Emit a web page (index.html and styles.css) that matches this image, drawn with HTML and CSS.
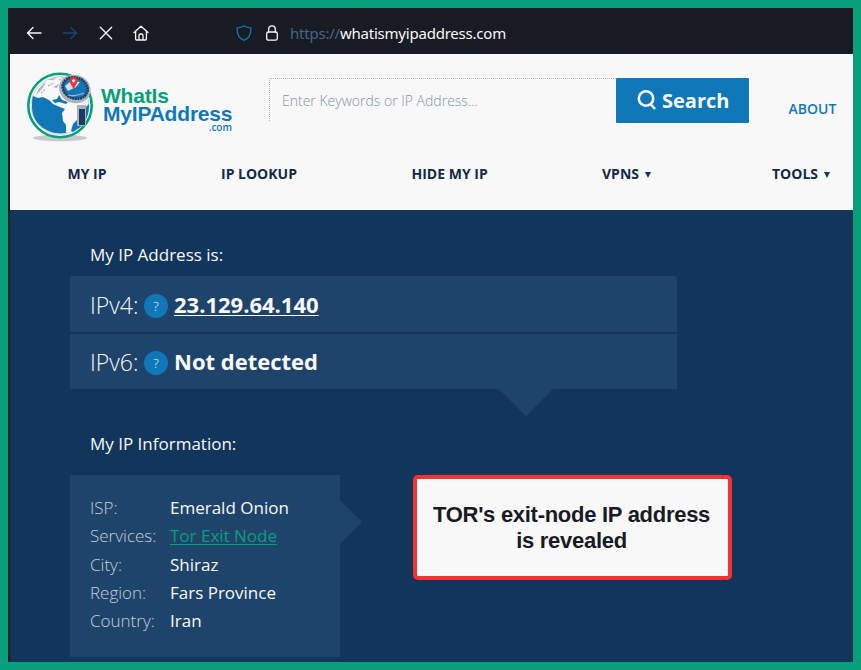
FILE: index.html
```
<!DOCTYPE html>
<html lang="en">
<head>
<meta charset="utf-8">
<title>What Is My IP Address</title>
<link rel="stylesheet" href="styles.css">
</head>
<body>
<div class="window">
  <div class="toolbar">
    <svg class="tool back" viewBox="0 0 16 16"><path d="M15 8H1.500M7 2.500L1.500 8L7 13.500"/></svg>
    <svg class="tool forward" viewBox="0 0 16 16"><path d="M1 8H14.500M9 2.500L14.500 8L9 13.500"/></svg>
    <svg class="tool stop" viewBox="0 0 16 16"><path d="M2.300 2.300L13.700 13.700M13.700 2.300L2.300 13.700"/></svg>
    <svg class="tool home" viewBox="0 0 16 16"><path d="M1 7.600L8 1.200L15 7.600M2.600 6.600V14a1 1 0 0 0 1 1H12.400a1 1 0 0 0 1-1V6.600M6 15V10.500a1.500 1.500 0 0 1 1.500-1.500h1a1.500 1.500 0 0 1 1.500 1.500V15"/></svg>
    <svg class="tool shield" viewBox="0 0 16 16"><path d="M8 .8C6 2.300 3.600 2.800 1.200 2.900C.8 8 2.500 13 8 15.400C13.500 13 15.200 8 14.800 2.900C12.400 2.800 10 2.300 8 .8Z"/></svg>
    <svg class="tool lock" viewBox="0 0 14 16"><rect x="1.700" y="7" width="10.600" height="8.200" rx="1.800"/><path d="M3.700 7V4.200a3.300 3.300 0 0 1 6.600 0V7"/></svg>
    <div class="url"><span class="scheme">https://</span><span class="host">whatismyipaddress.com</span></div>
  </div>
  <header class="header">
    <div class="top">
      <div class="logo">
        <svg class="globe" viewBox="0 0 70 72">
          <ellipse cx="34" cy="67" rx="27" ry="3.200" fill="#c5ccd0"/>
          <circle cx="34" cy="34.500" r="31.700" fill="#f8f8f8" stroke="#08a07b" stroke-width="2.600"/>
          <circle cx="34" cy="34.500" r="28.800" fill="none" stroke="#b8c3ca" stroke-width=".7"/>
          <path d="M7 25L12 27L17 26L23 29L27 33L34 36L39 38L36 42L37 50L40 54L40 62C24 65 6 54 6 36C6 31 6 28 7 25Z" fill="#1078b8"/>
          <path d="M10 24C13 17 16 13 20 11L16 18L10 24ZM21 9L32 6L27 9ZM27 16L33 13L31 17Z" fill="#a8b5be"/>
          <path d="M15 22L20 18M22 15L28 12M33 9L38 6" fill="none" stroke="#a8b5be" stroke-width="1.300" stroke-dasharray="2 1"/>
          <path d="M26 29L31 28L33 24L36 29L42 31L40 33L33 31L29 32Z" fill="#1078b8"/>
          <path d="M52 46L56 55L47 61L45 60L47 53L51 49Z" fill="#1078b8"/>
          <path d="M60 36L63 33C63 42 61 47 59 50Z" fill="#1078b8"/>
          <rect x="51" y="34" width="9" height="21" rx="1" fill="#a8b5be"/>
          <path d="M53 38h6v16h-6Z" fill="#1d3b61"/>
          <g transform="rotate(20 49 17.500)">
            <ellipse cx="49" cy="18" rx="16" ry="14" fill="#a8b5be"/>
            <ellipse cx="49" cy="17" rx="12.800" ry="10.500" fill="#1078b8" stroke="#1d3b61" stroke-width="2.600" stroke-dasharray="2 .6"/>
          </g>
          <path d="M39 15L45 10L54 11L50 16L42 20Z" fill="#d8e0e4"/>
          <path d="M42 24C47 26 53 24 58 22" fill="none" stroke="#a8b5be" stroke-width="1.300"/>
          <path d="M47.600 19C46 14 43.700 13 43.700 9.800a3.900 3.900 0 0 1 7.800 0C51.500 13 49 14 47.600 19Z" fill="#f73131"/>
          <circle cx="47.600" cy="9.800" r="1.600" fill="#f8f8f8"/>
        </svg>
        <div class="wordmark"><span class="what">WhatIs</span><span class="my">MyIPAddress</span><span class="com">.com</span></div>
      </div>
      <div class="search">
        <div class="field"><span class="placeholder">Enter Keywords or IP Address...</span></div>
        <div class="button">
          <svg class="glass" viewBox="0 0 20 20"><circle cx="9" cy="8.500" r="7.200"/><path d="M13.500 14L18 19"/></svg>
          <span class="button-text">Search</span>
        </div>
      </div>
      <div class="about"><span>ABOUT</span></div>
    </div>
    <nav class="nav">
      <span class="n1">MY IP</span><span class="n2">IP LOOKUP</span><span class="n3">HIDE MY IP</span><span class="n4">VPNS<i class="caret"></i></span><span class="n5">TOOLS<i class="caret"></i></span>
    </nav>
  </header>
  <main class="main">
    <h2 class="heading">My IP Address is:</h2>
    <div class="addresses">
      <div class="row"><span class="version">IPv4:</span><span class="help">?</span><span class="value link">23.129.64.140</span></div>
      <div class="row six"><span class="version">IPv6:</span><span class="help">?</span><span class="value none">Not detected</span></div>
    </div>
    <h2 class="heading info-heading">My IP Information:</h2>
    <div class="bottom">
      <dl class="info">
        <dt>ISP:</dt><dd>Emerald Onion</dd>
        <dt>Services:</dt><dd class="tor">Tor Exit Node</dd>
        <dt>City:</dt><dd>Shiraz</dd>
        <dt>Region:</dt><dd>Fars Province</dd>
        <dt>Country:</dt><dd>Iran</dd>
      </dl>
      <div class="callout"><span>TOR's exit-node IP address<br>is revealed</span></div>
    </div>
  </main>
</div>
</body>
</html>
```
FILE: styles.css
```
* { box-sizing: border-box; }
body { margin: 0; font-family: "Open Sans", sans-serif; }
.window {
  width: 861px; height: 670px; overflow: hidden;
  border: 8px solid #08a07b; background: #181b23;
}
.toolbar { height: 46px; display: flex; align-items: center; padding: 4px 0 0 18px; }
.tool { width: 16px; height: 16px; flex: none; fill: none; stroke: #f8f8f8; stroke-width: 1.300; stroke-linecap: round; stroke-linejoin: round; }
.forward { margin-left: 20px; stroke: #1d466f; }
.stop { margin-left: 20px; }
.home { margin-left: 19px; }
.shield { margin-left: 87px; stroke: #1078b8; }
.lock { width: 14px; margin-left: 13px; }
.url { margin-left: 11px; font-family: "Noto Sans", sans-serif; font-size: 15px; line-height: 20px; letter-spacing: -.22px; white-space: nowrap; color: #f8f8f8; }
.scheme { color: #43678a; }
.header { height: 156px; margin-left: 2px; background: #f8f8f8; }
.top { display: flex; height: 100px; }
.logo { display: flex; width: 259px; padding: 17px 0 0 16px; }
.globe { width: 70px; height: 72px; flex: none; }
.wordmark { display: flex; flex-direction: column; width: 131px; margin-left: 5px; padding-top: 16px; font-family: "Liberation Sans", sans-serif; font-weight: bold; white-space: nowrap; }
.what { font-size: 21px; line-height: 18px; letter-spacing: -.2px; color: #08a07b; }
.my { padding-left: 2px; font-size: 21px; line-height: 18px; color: #1078b8; letter-spacing: -.2px; }
.com { align-self: flex-end; font-family: "Open Sans", sans-serif; font-weight: 600; font-size: 10px; line-height: 8px; color: #1078b8; }
.search { display: flex; width: 480px; height: 45px; margin-top: 24px; }
.field { width: 347px; height: 43px; border: dotted #a8b5be; border-width: 1px 0 0 1px; padding: 11px 0 0 12px; }
.placeholder { display: block; font-size: 14px; font-weight: 300; line-height: 22px; color: #8296a3; white-space: nowrap; }
.button { display: flex; align-items: center; width: 133px; height: 45px; padding-left: 21px; border-radius: 1px; background: #1078b8; color: #f8f8f8; font-size: 20px; font-weight: 700; }
.glass { width: 20px; height: 20px; margin: -1px 5px 0 0; fill: none; stroke: #f8f8f8; stroke-width: 2.600; }
.about { margin: 44px 0 0 39.500px; font-size: 14px; line-height: 22px; font-weight: 600; color: #1078b8; }
.nav { display: grid; grid-template-columns: 153.500px 190.500px 190.500px 170px auto; padding: 9px 0 0 57.500px; font-size: 14px; line-height: 22px; font-weight: 700; color: #122a47; white-space: nowrap; }
.caret { display: inline-block; margin-left: 6px; border: solid transparent; border-width: 6px 3px 0; border-top-color: #14365c; vertical-align: 1px; }
.main { height: 452px; margin-left: 2px; padding: 34px 0 0 60px; background: #12355c; color: #f8f8f8; }
.heading { margin: 0; padding-left: 20px; font-size: 17px; line-height: 22px; font-weight: 400; white-space: nowrap; }
.addresses { position: relative; display: grid; grid-template-rows: 56px 55px; gap: 2px; width: 607px; margin-top: 10px; }
.addresses::after { content: ""; position: absolute; left: 429px; top: 113px; border: solid transparent; border-width: 27px 27px 0; border-top-color: #1f446b; }
.row { display: flex; align-items: center; padding-left: 20px; background: #1f446b; font-size: 22px; line-height: 30px; white-space: nowrap; }
.version { width: 54px; margin-top: 2px; font-size: 23px; font-weight: 300; }
.help { width: 24px; height: 24px; margin-top: 3px; border-radius: 50%; background: #1078b8; font-size: 13px; font-weight: 300; line-height: 24px; text-align: center; }
.value { margin-left: 6px; font-weight: 700; }
.link { text-decoration: underline; text-decoration-thickness: 1px; text-underline-offset: 2px; }
.six { padding-bottom: 1px; }
.info-heading { margin-top: 44px; }
.bottom { display: flex; margin-top: 20px; }
.info { position: relative; display: grid; grid-template-columns: 80px auto; grid-auto-rows: 28.250px; align-content: start; width: 270px; height: 182px; margin: 0; padding: 19px 0 0 20px; background: #1f446b; font-size: 17px; line-height: 28px; white-space: nowrap; }
.info::after { content: ""; position: absolute; left: 270px; top: 25px; border: solid transparent; border-width: 22px 0 22px 22px; border-left-color: #1f446b; }
.info dt { font-weight: 300; color: #c4d0d6; }
.info dd { margin: 0; }
.info .tor { color: #08a07b; text-decoration: underline; text-decoration-thickness: 1px; text-underline-offset: 2px; }
.callout { display: flex; justify-content: center; width: 319px; height: 105px; margin-left: 73px; padding: 23px 2px 0 0; border: 4px solid #f73131; border-radius: 5px; background: #f8f8f8; color: #181b23; font: bold 22px/26px "Liberation Sans", sans-serif; letter-spacing: -.28px; text-align: center; white-space: nowrap; }
```
